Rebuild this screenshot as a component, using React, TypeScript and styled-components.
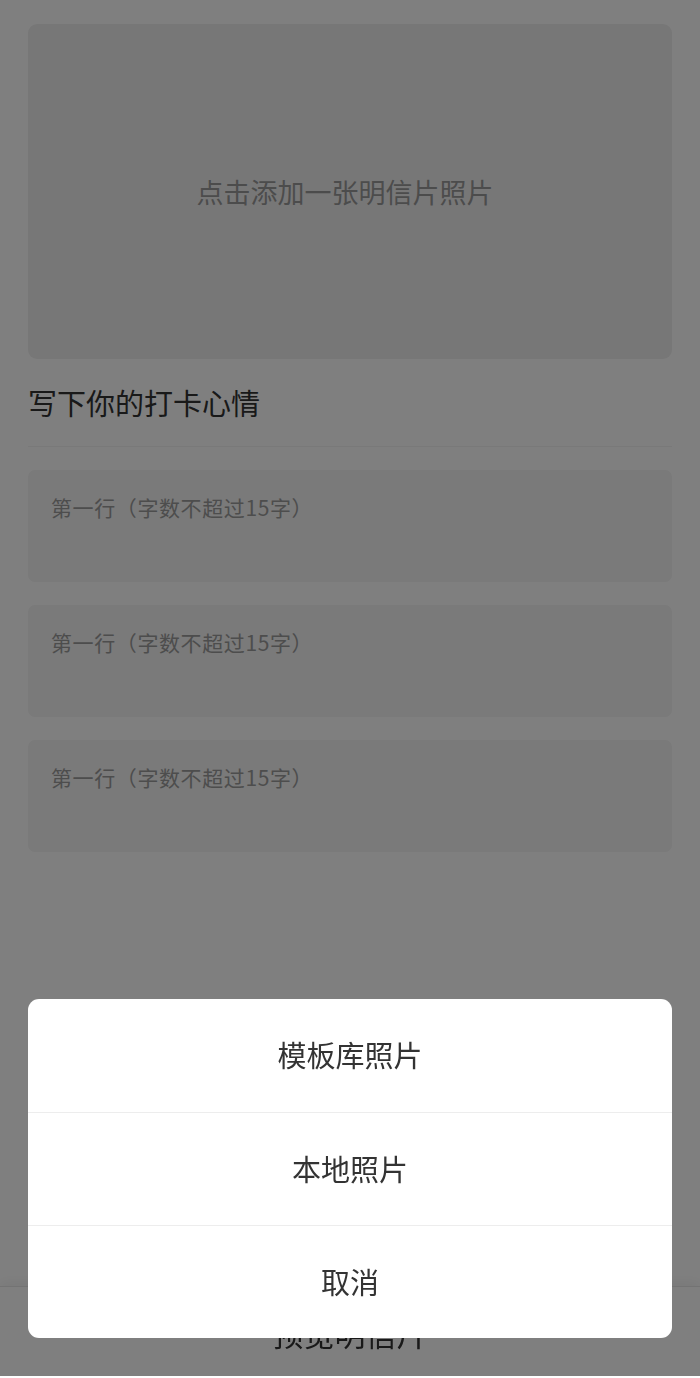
import React, { useState } from 'react';
import styled, { createGlobalStyle } from 'styled-components';

const GlobalStyle = createGlobalStyle`
  html, body {
    margin: 0;
    padding: 0;
    background: #ffffff;
  }
  body {
    font-family: "Noto Sans CJK SC", "Noto Sans", sans-serif;
    color: #333333;
  }
  * {
    box-sizing: border-box;
  }
`;

const Page = styled.div`
  position: relative;
  width: 700px;
  min-height: 1378px;
  background: #ffffff;
  padding: 24px 28px 120px;
  display: flex;
  flex-direction: column;
`;

const PhotoPicker = styled.div`
  height: 335px;
  border-radius: 9px;
  background: #efefef;
  display: flex;
  align-items: center;
  justify-content: center;
  padding-right: 10px;
  font-size: 27px;
  color: #999999;
`;

const SectionTitle = styled.div`
  margin-top: 23px;
  padding-bottom: 24px;
  font-size: 29px;
  line-height: 40px;
  color: #333333;
  border-bottom: 1px solid #f2f2f2;
`;

const Lines = styled.div`
  margin-top: 23px;
  display: flex;
  flex-direction: column;
  gap: 23px;
`;

const LineInput = styled.div`
  height: 112px;
  border-radius: 7px;
  background: #f4f4f4;
  padding: 22px 23px 0;
  font-size: 21px;
  line-height: 30px;
  letter-spacing: 0.6px;
  color: #9a9a9a;
`;

const BottomBar = styled.div`
  position: fixed;
  left: 0;
  right: 0;
  bottom: 0;
  height: 92px;
  background: #ffffff;
  box-shadow: 0 -3px 12px rgba(0, 0, 0, 0.06);
  border-top: 1px solid #e6e6e6;
  display: flex;
  align-items: center;
  justify-content: center;
  font-size: 31px;
  color: #333333;
`;

const Mask = styled.div`
  position: fixed;
  left: 0;
  right: 0;
  top: 0;
  bottom: 2px;
  background: rgba(0, 0, 0, 0.5);
  display: flex;
  flex-direction: column;
  justify-content: flex-end;
  padding: 0 28px 38px;
  z-index: 10;
`;

const Sheet = styled.div`
  background: #ffffff;
  border-radius: 11px;
  overflow: hidden;
  display: flex;
  flex-direction: column;
`;

const SheetItem = styled.div<{ $first?: boolean }>`
  height: 113px;
  display: flex;
  align-items: center;
  justify-content: center;
  padding-bottom: 3px;
  font-size: 29px;
  color: #333333;
  border-top: ${({ $first }) => ($first ? 'none' : '1px solid #ededed')};
  cursor: pointer;
`;

const lines = ['第一行（字数不超过15字）', '第一行（字数不超过15字）', '第一行（字数不超过15字）'];

const App: React.FC = () => {
  const [sheetOpen, setSheetOpen] = useState(true);

  return (
    <>
      <GlobalStyle />
      <Page>
        <PhotoPicker onClick={() => setSheetOpen(true)}>点击添加一张明信片照片</PhotoPicker>
        <SectionTitle>写下你的打卡心情</SectionTitle>
        <Lines>
          {lines.map((text, i) => (
            <LineInput key={i}>{text}</LineInput>
          ))}
        </Lines>
        <BottomBar>预览明信片</BottomBar>
      </Page>
      {sheetOpen && (
        <Mask>
          <Sheet>
            <SheetItem $first>模板库照片</SheetItem>
            <SheetItem>本地照片</SheetItem>
            <SheetItem onClick={() => setSheetOpen(false)}>取消</SheetItem>
          </Sheet>
        </Mask>
      )}
    </>
  );
};

export default App;
